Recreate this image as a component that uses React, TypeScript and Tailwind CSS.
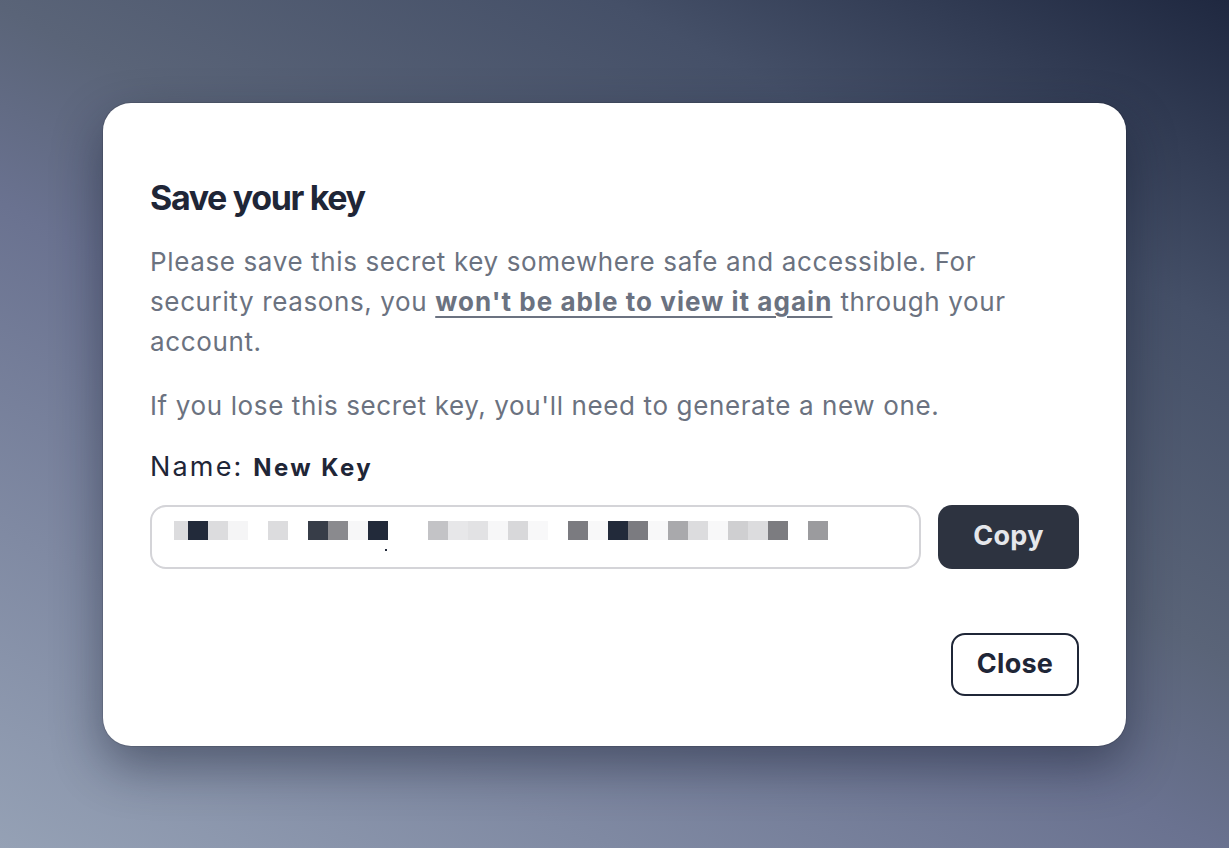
const blocks: { w: number; c: string }[] = [
  { w: 14, c: "#dcdcde" },
  { w: 20, c: "#222a3a" },
  { w: 20, c: "#dcdcde" },
  { w: 20, c: "#f5f5f6" },
  { w: 20, c: "transparent" },
  { w: 20, c: "#dcdcde" },
  { w: 20, c: "transparent" },
  { w: 20, c: "#373d48" },
  { w: 20, c: "#8a8a8e" },
  { w: 20, c: "#f7f7f8" },
  { w: 20, c: "#222a3a" },
  { w: 40, c: "transparent" },
  { w: 20, c: "#c3c3c6" },
  { w: 20, c: "#e7e7e9" },
  { w: 20, c: "#e2e2e4" },
  { w: 20, c: "#f7f7f8" },
  { w: 20, c: "#d8d8da" },
  { w: 20, c: "#f8f8f9" },
  { w: 20, c: "transparent" },
  { w: 20, c: "#7b7b80" },
  { w: 20, c: "#f8f8f9" },
  { w: 20, c: "#222a3a" },
  { w: 20, c: "#7b7b80" },
  { w: 20, c: "#f8f8f9" },
  { w: 20, c: "#a9a9ac" },
  { w: 20, c: "#dcdcde" },
  { w: 20, c: "#f8f8f9" },
  { w: 20, c: "#cfcfd1" },
  { w: 20, c: "#dcdcde" },
  { w: 20, c: "#7c7c80" },
  { w: 20, c: "transparent" },
  { w: 20, c: "#9b9b9e" },
];

export default function App() {
  return (
    <main className="flex h-[848px] w-full items-center justify-center bg-[linear-gradient(28deg,#95a1b5_0%,#6a7290_43%,#5a6478_56%,#455068_78%,#1f2840_100%)] font-['Inter',sans-serif]">
      <div className="w-[1023px] rounded-[28px] bg-white px-[47px] pt-[75px] pb-[50px] shadow-[0_20px_50px_rgba(15,23,42,0.45)] ring-1 ring-black/10">
        <h2 className="text-[34px] leading-[40px] font-bold tracking-[-0.04em] text-[#1f2637]">
          Save your key
        </h2>

        <p className="mt-[24px] text-[26px] leading-[40px] tracking-[0.024em] text-[#6b7280]">
          Please save this secret key somewhere safe and accessible. For
          security reasons, you{" "}
          <span className="font-bold tracking-[0.04em] underline decoration-2 underline-offset-[5px]">
            won't be able to view it again
          </span>{" "}
          through your account.
        </p>

        <p className="mt-[24px] text-[26px] leading-[40px] tracking-[0.024em] text-[#6b7280]">
          If you lose this secret key, you'll need to generate a new one.
        </p>

        <div className="mt-[21px] text-[27px] leading-[40px] tracking-[0.08em] text-[#1f2637]">
          Name:{" "}
          <span className="text-[24px] font-bold tracking-[0.1em]">
            New Key
          </span>
        </div>

        <div className="mt-[17px] flex gap-[17px]">
          <div className="flex h-[64px] flex-1 flex-col rounded-[16px] border-2 border-[#d4d4d8] pt-[14px] pl-[22px]">
            <div className="flex h-[19px]">
              {blocks.map((b, i) => (
                <div
                  key={i}
                  className="h-[19px] shrink-0"
                  style={{ width: b.w, backgroundColor: b.c }}
                />
              ))}
            </div>
            <div className="mt-[9px] ml-[211px] h-[2px] w-[2px] bg-[#222a3a]" />
          </div>
          <button className="h-[64px] w-[141px] rounded-[14px] bg-[#2d3340] text-[27px] font-bold tracking-[0.01em] text-[#e5e7eb]">
            Copy
          </button>
        </div>

        <div className="mt-[64px] flex justify-end">
          <button className="h-[63px] w-[128px] rounded-[14px] border-2 border-[#1f2637] text-[27px] font-bold tracking-[0.01em] text-[#1f2637]">
            Close
          </button>
        </div>
      </div>
    </main>
  );
}
